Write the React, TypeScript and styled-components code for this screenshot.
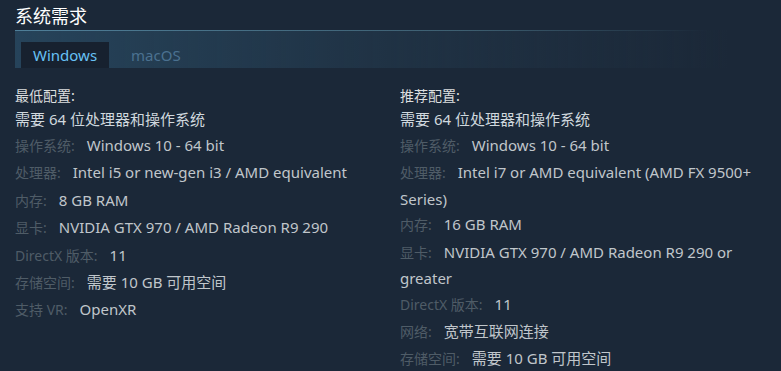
import { FunctionComponent } from 'react';
import styled, { createGlobalStyle } from 'styled-components';

interface SpecRow {
  label?: string;
  value: string;
}

interface SpecColumnProps {
  heading: string;
  rows: SpecRow[];
}

const minimum: SpecRow[] = [
  { value: '需要 64 位处理器和操作系统' },
  { label: '操作系统:', value: 'Windows 10 - 64 bit' },
  { label: '处理器:', value: 'Intel i5 or new-gen i3 / AMD equivalent' },
  { label: '内存:', value: '8 GB RAM' },
  { label: '显卡:', value: 'NVIDIA GTX 970 / AMD Radeon R9 290' },
  { label: 'DirectX 版本:', value: '11' },
  { label: '存储空间:', value: '需要 10 GB 可用空间' },
  { label: '支持 VR:', value: 'OpenXR' },
];

const recommended: SpecRow[] = [
  { value: '需要 64 位处理器和操作系统' },
  { label: '操作系统:', value: 'Windows 10 - 64 bit' },
  { label: '处理器:', value: 'Intel i7 or AMD equivalent (AMD FX 9500+ Series)' },
  { label: '内存:', value: '16 GB RAM' },
  { label: '显卡:', value: 'NVIDIA GTX 970 / AMD Radeon R9 290 or greater' },
  { label: 'DirectX 版本:', value: '11' },
  { label: '网络:', value: '宽带互联网连接' },
  { label: '存储空间:', value: '需要 10 GB 可用空间' },
];

const SpecColumn: FunctionComponent<SpecColumnProps> = ({ heading, rows }) => {
  return (
    <Column>
      <Heading>{heading}</Heading>
      <List>
        {rows.map((row, i) => (
          <Item key={i} $plain={!row.label}>
            {row.label && <Label>{row.label}</Label>}
            {row.value}
          </Item>
        ))}
      </List>
    </Column>
  );
};

const App: FunctionComponent = () => {
  return (
    <>
      <GlobalStyle />
      <Page>
        <Title>系统需求</Title>
        <TabBar>
          <Tab $active>Windows</Tab>
          <Tab>macOS</Tab>
        </TabBar>
        <Columns>
          <SpecColumn heading="最低配置:" rows={minimum} />
          <SpecColumn heading="推荐配置:" rows={recommended} />
        </Columns>
      </Page>
    </>
  );
};

const GlobalStyle = createGlobalStyle`
  html, body {
    margin: 0;
    padding: 0;
    background: #1b2838;
  }
  body {
    font-family: 'Noto Sans', 'Noto Sans CJK SC', sans-serif;
  }
`;

const Page = styled.div`
  width: 781px;
  height: 371px;
  padding: 0 15px;
  box-sizing: border-box;
  overflow: hidden;
  background: #1b2838;
`;

const Title = styled.h2`
  margin: 0;
  padding-top: 3px;
  height: 27px;
  font-size: 18px;
  font-weight: 400;
  line-height: 24px;
  color: #ffffff;
  font-family: 'Noto Sans CJK SC', sans-serif;
`;

const TabBar = styled.div`
  display: flex;
  align-items: flex-end;
  gap: 10px;
  height: 38px;
  padding-left: 6px;
  box-sizing: border-box;
  border-top: 1px solid transparent;
  border-image: linear-gradient(90deg, #4f7f99 0%, #3d5e70 60%, rgba(27, 40, 56, 0) 92%) 1;
  background: linear-gradient(
    90deg,
    rgba(40, 72, 96, 0.85) 0%,
    rgba(35, 58, 78, 0.55) 50%,
    rgba(27, 40, 56, 0) 95%
  );
`;

const Tab = styled.div<{ $active?: boolean }>`
  height: 26px;
  padding: 0 12px;
  min-width: 62px;
  font-size: 15px;
  line-height: 26px;
  color: ${(p) => (p.$active ? '#67c1f5' : '#4b7190')};
  background: ${(p) => (p.$active ? '#17212f' : 'transparent')};
`;

const Columns = styled.div`
  display: grid;
  grid-template-columns: 385px 368px;
  padding-top: 17px;
`;

const Column = styled.div`
  font-size: 15px;
  color: #c0c6cb;
`;

const Heading = styled.div`
  font-size: 14px;
  line-height: 21px;
  color: #dcdedf;
  font-family: 'Noto Sans CJK SC', sans-serif;
`;

const List = styled.ul`
  list-style: none;
  margin: 0;
  padding: 0;
`;

const Item = styled.li<{ $plain?: boolean }>`
  line-height: ${(p) => (p.$plain ? '26px' : '24.5px')};
  color: ${(p) => (p.$plain ? '#d0d8de' : '#c0c6cb')};
`;

const Label = styled.span`
  margin-right: 12px;
  font-size: 14px;
  line-height: 27.4px;
  color: #4f5c67;
`;

export default App;
